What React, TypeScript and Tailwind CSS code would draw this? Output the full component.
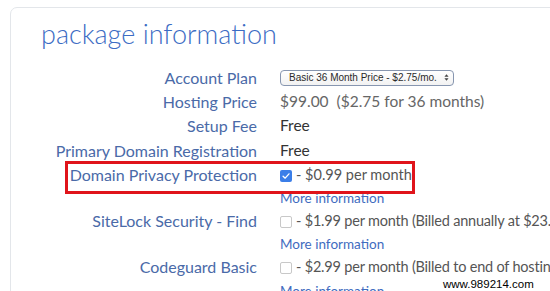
import type { ReactNode } from 'react'

const Check = ({ checked }: { checked?: boolean }) =>
  checked ? (
    <span className="inline-flex w-[12px] h-[12px] rounded-[2px] bg-[#3b7ee8] items-center justify-center mr-[4px] translate-y-[1px]">
      <svg viewBox="0 0 12 12" className="w-[10px] h-[10px]">
        <path d="M2.5 6.2 L5 8.6 L9.6 3.4" fill="none" stroke="white" strokeWidth="1.6" strokeLinecap="round" strokeLinejoin="round" />
      </svg>
    </span>
  ) : (
    <span className="inline-block w-[12px] h-[12px] rounded-[2px] border border-[#c8c8c8] bg-white mr-[4px] translate-y-[1px]" />
  )

const Row = ({ label, children, h = 'h-[24px]' }: { label?: string; children: ReactNode; h?: string }) => (
  <div className={`flex items-center ${h}`}>
    <div className="w-[246px] shrink-0 text-right text-[16px] text-[#4a6aa8] whitespace-nowrap">{label}</div>
    <div className="pl-[23px] flex items-center whitespace-nowrap">{children}</div>
  </div>
)

const More = () => <span className="text-[13.5px] text-[#3f6cc0]">More information</span>

export default function App() {
  return (
    <div className="relative w-[550px] h-[291px] overflow-hidden bg-white font-['Lato',sans-serif]">
      <div className="ml-[10px] mt-[7px] w-[600px] h-[320px] border border-[#e3e6ea] rounded-[7px] bg-white">
        <h1 className="pl-[30px] pt-[10px] text-[27px] leading-[31px] text-[#3c6cc4] font-light">package information</h1>

        <div className="relative mt-[16px]">
          <Row label="Account Plan" h="h-[25px]">
            <div className="flex items-center h-[16px] w-[174px] rounded-[4px] border border-[#8796b0] bg-gradient-to-b from-white to-[#f2f2f2] pl-[8px] pr-[4px] font-['Liberation_Sans',sans-serif] text-[10px] text-[#2a2a2a]">
              <span className="flex-1">Basic 36 Month Price - $2.75/mo.</span>
              <svg viewBox="0 0 6 10" className="w-[5px] h-[9px]">
                <path d="M0.5 4 L3 1 L5.5 4 Z M0.5 6 L3 9 L5.5 6 Z" fill="#444" />
              </svg>
            </div>
          </Row>
          <Row label="Hosting Price">
            <span className="text-[15.5px] text-[#666]">$99.00&nbsp;&nbsp;($2.75 for 36 months)</span>
          </Row>
          <Row label="Setup Fee">
            <span className="text-[15.5px] text-[#333]">Free</span>
          </Row>
          <Row label="Primary Domain Registration" h="h-[25px]">
            <span className="text-[15.5px] text-[#333]">Free</span>
          </Row>
          <Row label="Domain Privacy Protection">
            <Check checked />
            <span className="text-[14.5px] text-[#555]">- $0.99 per month</span>
          </Row>
          <Row h="h-[22px]">
            <More />
          </Row>
          <Row label="SiteLock Security - Find">
            <Check />
            <span className="text-[14.5px] tracking-[-0.2px] text-[#555]">- $1.99 per month (Billed annually at $23.88)</span>
          </Row>
          <Row h="h-[22px]">
            <More />
          </Row>
          <Row label="Codeguard Basic">
            <Check />
            <span className="text-[14.5px] tracking-[-0.2px] text-[#555]">- $2.99 per month (Billed to end of hosting term)</span>
          </Row>
          <Row>
            <More />
          </Row>

          <div className="absolute left-[54px] top-[96px] w-[350px] h-[33px] border-[3px] border-[#e0141b] pointer-events-none" />
        </div>
      </div>

      <span className="absolute left-[443px] top-[276px] font-['Liberation_Sans',sans-serif] text-[11.5px] text-black">www.989214.com</span>
    </div>
  )
}
